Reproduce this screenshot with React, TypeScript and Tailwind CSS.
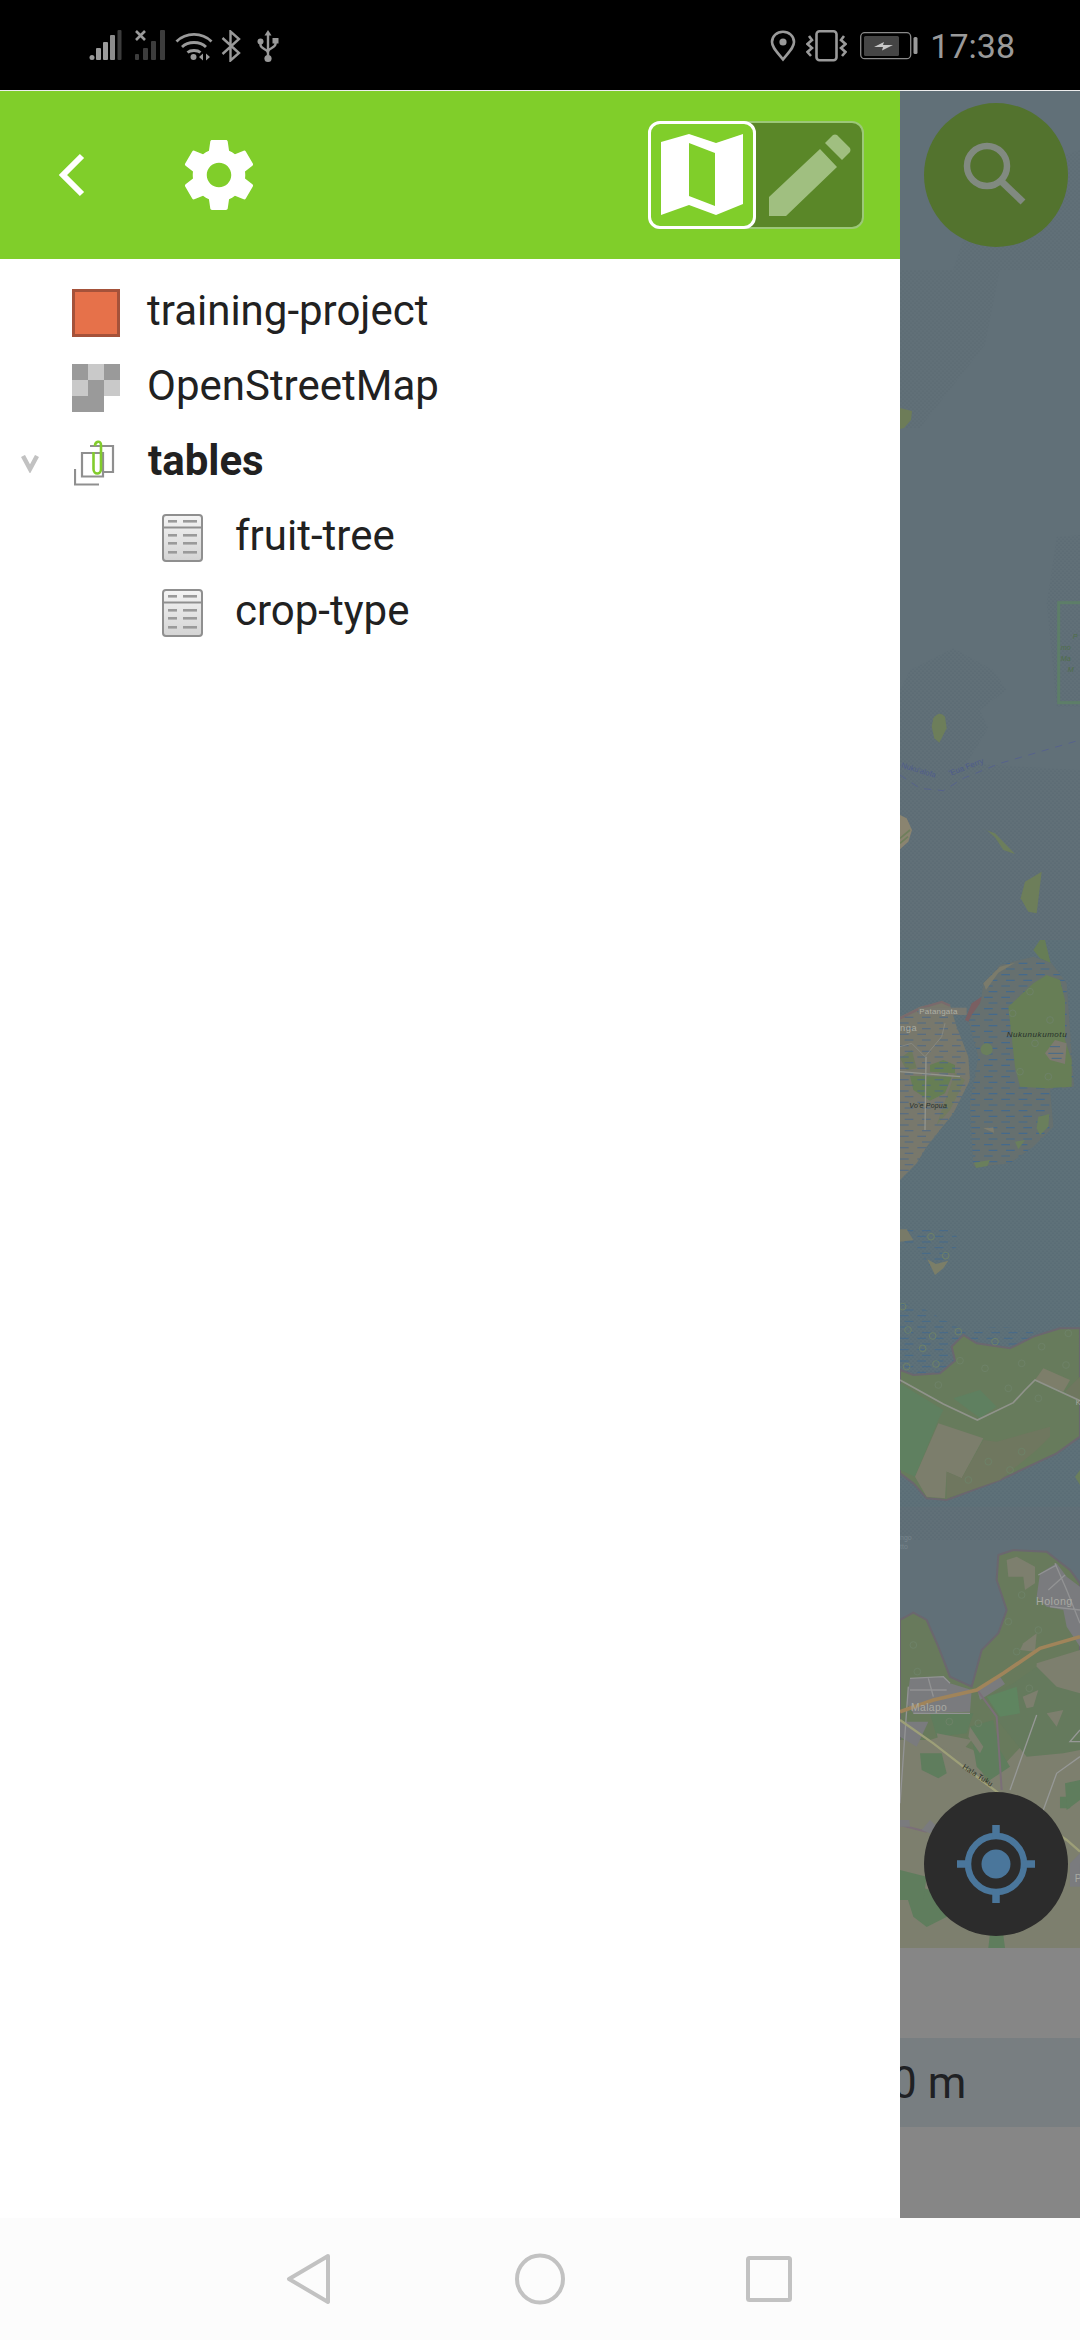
import React from "react";

function Signal1() {
  return (
    <svg width="36" height="32" viewBox="0 0 36 32" className="shrink-0">
      <circle cx="4" cy="27.5" r="2.5" fill="#9a9a9a" />
      <rect x="8" y="18" width="5" height="12" rx="1" fill="#9a9a9a" />
      <rect x="15" y="12" width="5" height="18" rx="1" fill="#9a9a9a" />
      <rect x="22" y="5" width="5" height="25" rx="1" fill="#8c8c8c" />
      <rect x="29.5" y="0" width="4" height="30" rx="1" fill="#3c3c3c" />
    </svg>
  );
}
function Signal2() {
  return (
    <svg width="34" height="32" viewBox="0 0 34 32" className="shrink-0">
      <path d="M1 1 L10 10 M10 1 L1 10" stroke="#9a9a9a" strokeWidth="2.6" />
      <rect x="0" y="24" width="4" height="6" rx="1" fill="#3c3c3c" />
      <rect x="8" y="18" width="5" height="12" rx="1" fill="#3c3c3c" />
      <rect x="16" y="11" width="5" height="19" rx="1" fill="#3c3c3c" />
      <rect x="25" y="0" width="5" height="30" rx="1" fill="#3c3c3c" />
    </svg>
  );
}
function Wifi() {
  return (
    <svg width="38" height="32" viewBox="0 0 38 32" className="shrink-0">
      <g fill="none" stroke="#9a9a9a" strokeWidth="2.8">
        <path d="M1.5 11.5 C11 2 27 2 36.5 11.5" />
        <path d="M7 17 C13 11 25 11 31 17" />
        <path d="M12.5 22.5 C15.5 19.8 22.5 19.8 25.5 22.5" />
      </g>
      <circle cx="18.5" cy="27" r="3" fill="#9a9a9a" />
      <path d="M24 27 L28 23.5 V30.5 Z M31 23.5 L31 30.5 L35 27 Z" fill="#9a9a9a" />
    </svg>
  );
}
function Bluetooth() {
  return (
    <svg width="20" height="32" viewBox="0 0 20 32" className="shrink-0">
      <path d="M1.5 8 L18 23 L9.5 30.5 V1.5 L18 9 L1.5 24" fill="none" stroke="#9a9a9a" strokeWidth="2.4" />
    </svg>
  );
}
function Usb() {
  return (
    <svg width="22" height="33" viewBox="0 0 22 33" className="shrink-0">
      <path d="M11 0 L14.5 5.5 H7.5 Z" fill="#9a9a9a" />
      <path d="M11 4 V28 M3.5 12 V15 C3.5 19 11 19 11 23 M18.5 11 V14 C18.5 18 11 18 11 22" fill="none" stroke="#9a9a9a" strokeWidth="2.4" />
      <circle cx="3.5" cy="11.5" r="3" fill="#9a9a9a" />
      <rect x="15.5" y="8" width="6" height="5.5" fill="#9a9a9a" />
      <circle cx="11" cy="28.5" r="3.6" fill="#9a9a9a" />
    </svg>
  );
}
function Pin() {
  return (
    <svg width="26" height="32" viewBox="0 0 26 32" className="shrink-0">
      <path d="M13 29.5 C7 22 2 17.5 2 12 C2 6 7 1.8 13 1.8 C19 1.8 24 6 24 12 C24 17.5 19 22 13 29.5 Z" fill="none" stroke="#9a9a9a" strokeWidth="2.6" />
      <circle cx="13" cy="12" r="3.6" fill="#9a9a9a" />
    </svg>
  );
}
function Vibrate() {
  return (
    <svg width="41" height="32" viewBox="0 0 41 32" className="shrink-0">
      <rect x="10.5" y="1.3" width="20" height="29" rx="3" fill="none" stroke="#9a9a9a" strokeWidth="2.6" />
      <path d="M3 6 L6 10 L1.5 14 L6 18 L1.5 22 L5 26" fill="none" stroke="#9a9a9a" strokeWidth="2.6" />
      <path d="M38 6 L35 10 L39.5 14 L35 18 L39.5 22 L36 26" fill="none" stroke="#9a9a9a" strokeWidth="2.6" />
    </svg>
  );
}
function Battery() {
  return (
    <svg width="58" height="28" viewBox="0 0 58 28" className="shrink-0">
      <rect x="0.7" y="0.7" width="50" height="26" rx="4" fill="none" stroke="#8a8a8a" strokeWidth="1.3" />
      <rect x="4" y="4" width="35" height="20" rx="1.5" fill="#454545" />
      <path d="M14 15 L24 10 L23 13 L33 13 L22 18.5 L23 15 Z" fill="#c8c8c8" />
      <rect x="53.5" y="5" width="4" height="17" rx="1.5" fill="#9a9a9a" />
    </svg>
  );
}

function StatusBar() {
  return (
    <div className="flex h-[90px] shrink-0 items-center justify-between bg-black pl-[88px] pr-[65px]">
      <div className="flex items-center gap-[8px] pt-[2px]">
        <Signal1 />
        <div className="ml-[3px]"><Signal2 /></div>
        <div className="-ml-[2px]"><Wifi /></div>
        <Bluetooth />
        <div className="ml-[8px]"><Usb /></div>
      </div>
      <div className="flex items-center pt-[2px]">
        <Pin />
        <div className="ml-[10px]"><Vibrate /></div>
        <div className="ml-[13px]"><Battery /></div>
        <span className="ml-[12px] font-['Roboto',sans-serif] text-[34px] leading-none text-[#9a9a9a]">17:38</span>
      </div>
    </div>
  );
}

function Header() {
  return (
    <div className="flex h-[168px] shrink-0 items-center bg-[#80ce2a] pl-[58px] pr-[36px]">
      <svg width="28" height="44" viewBox="0 0 28 44" className="shrink-0">
        <path d="M24 3 L5 22 L24 41" fill="none" stroke="#fff" strokeWidth="6" />
      </svg>
      <svg width="84" height="84" viewBox="0 0 24 24" className="ml-[91px] shrink-0" fill="#fff">
        <path d="M19.43 12.98c.04-.32.07-.64.07-.98s-.03-.66-.07-.98l2.11-1.65c.19-.15.24-.42.12-.64l-2-3.46c-.12-.22-.39-.3-.61-.22l-2.49 1c-.52-.4-1.08-.73-1.69-.98l-.38-2.65C14.46 2.18 14.25 2 14 2h-4c-.25 0-.46.18-.49.42l-.38 2.65c-.61.25-1.17.59-1.69.98l-2.49-1c-.23-.09-.49 0-.61.22l-2 3.46c-.13.22-.07.49.12.64l2.11 1.65c-.04.32-.07.65-.07.98s.03.66.07.98l-2.11 1.65c-.19.15-.24.42-.12.64l2 3.46c.12.22.39.3.61.22l2.49-1c.52.4 1.08.73 1.69.98l.38 2.65c.03.24.24.42.49.42h4c.25 0 .46-.18.49-.42l.38-2.65c.61-.25 1.17-.59 1.69-.98l2.49 1c.23.09.49 0 .61-.22l2-3.46c.12-.22.07-.49-.12-.64l-2.11-1.65zM12 15.5c-1.93 0-3.5-1.57-3.5-3.5s1.57-3.5 3.5-3.5 3.5 1.57 3.5 3.5-1.57 3.5-3.5 3.5z" />
      </svg>
      <div className="ml-auto flex h-[108px] w-[216px] rounded-[12px] border-[2px] border-[#9cc878] bg-[#5a8728]">
        <div className="-m-[2px] flex h-[108px] w-[108px] shrink-0 items-center justify-center rounded-[12px] border-[3px] border-white bg-[#80ce2a]">
          <svg width="82" height="82" viewBox="0 0 82 82">
            <path fill="#fff" fillRule="evenodd" d="M0 8 L28 0 L55 9 L82 0 V70 L55 81 L28 71 L0 81 Z M28 9 V62 L54 72 V19 Z" />
          </svg>
        </div>
        <div className="flex flex-1 items-center justify-center pl-[4px]">
          <svg width="82" height="82" viewBox="0 0 82 82">
            <path fill="#a0bf80" d="M0 63 L51 15 L68 33 L17 82 H0 Z M56 9 L64 1 Q66 0 68 1 L81 14 Q82 16 81 18 L73 26 Z" />
          </svg>
        </div>
      </div>
    </div>
  );
}

function TableIcon() {
  return (
    <svg width="41" height="48" viewBox="0 0 41 48" className="shrink-0">
      <defs>
        <linearGradient id="tbl" x1="0" y1="0" x2="0" y2="1">
          <stop offset="0" stopColor="#f4f4f4" />
          <stop offset="1" stopColor="#d4d4d4" />
        </linearGradient>
      </defs>
      <rect x="1" y="1" width="39" height="46" rx="3" fill="url(#tbl)" stroke="#8f8f8f" strokeWidth="2" />
      <path d="M1 13.5 H40" stroke="#8f8f8f" strokeWidth="2" />
      <g fill="#9a9a9a">
        <rect x="6" y="6" width="9" height="2.6" />
        <rect x="21" y="6" width="14" height="2.6" />
        <rect x="6" y="20" width="9" height="2.6" />
        <rect x="21" y="20" width="14" height="2.6" />
        <rect x="6" y="28" width="9" height="2.6" />
        <rect x="21" y="28" width="14" height="2.6" />
        <rect x="6" y="37" width="9" height="2.6" />
        <rect x="21" y="37" width="14" height="2.6" />
      </g>
    </svg>
  );
}

function TileIcon() {
  const c = ["#9a9a9a", "#c9c9c9", "#9a9a9a", "#c9c9c9", "#9a9a9a", "#c9c9c9", "#9a9a9a", "#9a9a9a", "#ffffff"];
  return (
    <div className="grid h-[48px] w-[48px] shrink-0 grid-cols-3 grid-rows-3">
      {c.map((color, i) => (
        <div key={i} style={{ backgroundColor: color }} />
      ))}
    </div>
  );
}

function GroupIcon() {
  return (
    <svg width="42" height="46" viewBox="0 0 42 46" className="shrink-0">
      <g fill="none" stroke="#8f8f8f" strokeWidth="2.2">
        <path d="M1 29 V44.5 H25" />
        <path d="M8 36.5 V13 H29 V36.5 Z" />
        <path d="M16 6 H39 V32 H29" />
      </g>
      <path d="M19.5 12 V29 C19.5 35 27 35 27 29 V5 C27 0 21 1 21 6" fill="none" stroke="#82cc2c" strokeWidth="2.6" />
    </svg>
  );
}

function Row({ children, indent }: { children: React.ReactNode; indent?: boolean }) {
  return <div className={`flex h-[75px] items-center ${indent ? "pl-[162px]" : "pl-[72px]"}`}>{children}</div>;
}

const labelCls = "font-['Roboto',sans-serif] text-[42px] leading-none -mt-[3px] text-[#212121]";

function Drawer() {
  return (
    <div className="flex w-[900px] shrink-0 flex-col bg-white">
      <Header />
      <div className="flex flex-1 flex-col pt-[16px]">
        <Row>
          <div className="h-[48px] w-[48px] shrink-0 border-[3px] border-[#a5523a] bg-[#e6714a]" />
          <span className={`ml-[27px] ${labelCls}`}>training-project</span>
        </Row>
        <Row>
          <TileIcon />
          <span className={`ml-[27px] ${labelCls}`}>OpenStreetMap</span>
        </Row>
        <div className="flex h-[75px] items-center pl-[21px]">
          <svg width="18" height="18" viewBox="0 0 18 18" className="mt-[2px] shrink-0">
            <path d="M2 1 L9 14 L16 1" fill="none" stroke="#c2c2c2" strokeWidth="4.5" />
          </svg>
          <div className="ml-[35px]"><GroupIcon /></div>
          <span className={`ml-[32px] font-bold ${labelCls}`}>tables</span>
        </div>
        <Row indent>
          <TableIcon />
          <span className={`ml-[32px] ${labelCls}`}>fruit-tree</span>
        </Row>
        <Row indent>
          <TableIcon />
          <span className={`ml-[32px] ${labelCls}`}>crop-type</span>
        </Row>
      </div>
    </div>
  );
}

const treeSpots: [number, number][] = [
  [93, 890], [137, 947], [8, 1100], [24, 1170], [98, 1188], [175, 1175], [68, 1225], [285, 1205], [20, 1280], [108, 1272],
  [180, 1262], [255, 1285], [365, 1270], [425, 1220], [498, 1275], [505, 1180], [115, 1335], [325, 1345], [415, 1375],
  [390, 155], [338, 220], [450, 240], [405, 310], [360, 395], [445, 410],
  [265, 1565], [365, 1535], [205, 1620], [330, 1590],
  [365, 1965], [325, 2045], [415, 2070], [350, 2135], [40, 2115], [52, 2195], [148, 2345], [235, 2350], [388, 2245],
];

const reefDashes = (x0: number, y0: number, x1: number, y1: number) => {
  const out: string[] = [];
  let row = 0;
  for (let y = y0; y < y1; y += 17) {
    for (let x = x0 + (row % 2 ? 14 : 0); x < x1; x += 52) {
      out.push(`M${x} ${y} h26`);
    }
    row++;
  }
  return out.join(" ");
};

function MapArt() {
  return (
    <svg className="h-full w-full" viewBox="900 91 180 1857" preserveAspectRatio="none">
      <defs>
        <pattern id="stip" width="4" height="4" patternUnits="userSpaceOnUse">
          <circle cx="1" cy="1" r="0.6" fill="#53626b" />
          <circle cx="3" cy="3" r="0.6" fill="#53626b" />
        </pattern>
        <pattern id="stip2" width="12" height="12" patternUnits="userSpaceOnUse">
          <circle cx="3" cy="3" r="1.7" fill="#50606a" />
          <circle cx="9" cy="9" r="1.7" fill="#50606a" />
        </pattern>
        <clipPath id="reefA">
          <path d="M250 130 L300 75 L400 50 L455 70 L500 130 L522 440 L450 448 L460 560 L400 620 L330 670 L220 682 L210 490 L235 350 L205 240 L245 170 Z" />
        </clipPath>
        <clipPath id="reefB">
          <path d="M0 230 L60 200 L125 185 L150 195 L170 260 L205 350 L210 420 L160 520 L80 620 L50 670 L0 720 Z" />
        </clipPath>
        <clipPath id="reefC">
          <path d="M0 1090 L60 1100 L170 1160 L190 1170 L300 1160 L400 1170 L400 1220 L330 1230 L230 1215 L190 1190 L160 1225 L165 1262 L125 1300 L50 1310 L0 1292 Z M0 860 L170 860 L170 920 L110 1000 L40 920 L0 910 Z" />
        </clipPath>
      </defs>

      {/* water and its stipple, north of the islands */}
      <rect x="900" y="91" width="180" height="1857" fill="#617078" />
      <path d="M953 270 L975 205 L1010 173 L1080 150 V270 Z" fill="url(#stip)" />
      <path d="M900 270 H1000 L985 345 L920 428 L900 428 Z" fill="url(#stip)" />

      <path d="M900 408 L912 411 L911 420 L904 428 L900 429 Z" fill="#6d7c58" />

      {/* y = 480 to 960 */}
      <g transform="translate(900 480) scale(0.33333)">
        <path d="M0 630 L30 570 L160 505 L280 570 L320 630 L240 690 L265 745 L200 850 L540 870 L540 1440 L0 1440 Z" fill="url(#stip2)" />
        <path d="M440 370 L470 170 L540 165 L540 680 L470 680 Z" fill="url(#stip2)" />
        <rect x="476" y="368" width="90" height="300" fill="none" stroke="#5d7e68" strokeWidth="9" />
        <g className="font-['Liberation_Sans',sans-serif]" fontStyle="italic" fontSize="22" fill="#4f6e48">
          <text x="518" y="478">P</text>
          <text x="482" y="510">mo</text>
          <text x="482" y="542">Ma</text>
          <text x="503" y="575">M</text>
        </g>
        <path d="M100 715 Q118 690 135 710 L140 745 L118 788 L103 775 L95 740 Z" fill="#6d7e5a" />
        <path d="M0 885 L60 925 L130 932 L190 895 L300 850 L540 780" fill="none" stroke="#56628c" strokeWidth="3" strokeDasharray="22 20" />
        <g className="font-['Liberation_Sans',sans-serif]" fontSize="24" fill="#4f5c8c">
          <text x="2" y="862" transform="rotate(17 2 862)" fontSize="23">Nuku'alofa</text>
          <text x="150" y="888" transform="rotate(-21 150 888)">'Eua Ferry</text>
        </g>
        <path d="M0 1005 L20 1015 L36 1050 L25 1085 L0 1108 Z" fill="#8a8470" />
        <path d="M0 1075 L30 1050 M0 1090 L24 1070" stroke="#6f7f5c" strokeWidth="5" />
        <path d="M242 1045 L285 1060 L345 1122 L310 1110 L285 1072 L262 1052 Z" fill="#6c7e5c" />
        <path d="M425 1175 L410 1300 L385 1295 L362 1255 L375 1205 Z" fill="#6d7e5a" />
        <path d="M420 1380 L445 1440 L403 1440 L400 1410 Z" fill="#6d7e5a" />
      </g>

      {/* y = 940 to the foot of the map */}
      <g transform="translate(900 940) scale(0.33333)">
        <rect x="0" y="0" width="540" height="1700" fill="#5e7179" />
        <rect x="0" y="0" width="540" height="1800" fill="url(#stip2)" />

        <path d="M420 0 L435 0 L452 70 L420 55 L400 30 Z" fill="#667d56" />

        {/* reef */}
        <path d="M250 130 L300 75 L400 50 L455 70 L500 130 L522 440 L450 448 L460 560 L400 620 L330 670 L220 682 L210 490 L235 350 L205 240 L245 170 Z" fill="#66706f" />
        <path d={reefDashes(200, 70, 530, 690)} clipPath="url(#reefA)" stroke="#456a8c" strokeWidth="3.5" />
        <path d="M250 130 L300 80 L345 68 L295 98 L258 150 Z" fill="#7b7b6b" />
        <path d="M195 240 L215 190 L245 170 L240 190 L215 225 L205 245 Z" fill="#7a5f62" />

        {/* Nukunukumotu */}
        <path d="M325 200 L400 130 L440 105 L480 120 L495 180 L495 300 L515 360 L515 440 L440 445 L360 440 L345 380 L335 290 Z" fill="#677e56" />
        <path d="M435 340 L465 300 L500 310 L495 372 L450 360 Z" fill="#7d7a70" />
        <path d="M450 320 H480 M445 340 H490 M455 355 H485" stroke="#456a8c" strokeWidth="3" />
        <circle cx="260" cy="328" r="18" fill="#6a7f5c" />
        <path d="M415 530 L448 522 L445 560 L420 585 L410 565 Z" fill="#6a7f5c" />
        <path d="M222 668 L270 660 L262 678 L228 684 Z" fill="#6a7f5c" />
        <path d="M345 605 L375 600 L355 628 Z" fill="#6a7f5c" />
        <path d="M250 565 L280 562 L282 578 Z" fill="#7f7d6d" />

        {/* Patangata */}
        <path d="M0 230 L60 200 L125 185 L150 195 L170 260 L205 350 L210 420 L160 520 L80 620 L50 670 L0 720 Z" fill="#78786c" />
        <path d="M0 235 L60 205 L125 186 L150 197" fill="none" stroke="#7a6a6c" strokeWidth="7" />
        <path d="M30 408 L155 410 L135 460 L90 482 L40 450 Z" fill="#667e54" />
        <path d="M90 375 L130 360 L165 375 L165 400 L90 395 Z" fill="#667e54" />
        <path d="M0 355 L35 330 L50 385 L20 390 Z" fill="#6d7a5c" />
        <path d="M165 400 L195 420 L150 510 L110 555 L120 525 Z" fill="#727b5f" />
        <path d={reefDashes(0, 215, 215, 720)} clipPath="url(#reefB)" stroke="#4f6a86" strokeWidth="3.2" />
        <path d="M0 395 L180 410 M78 350 L75 570" fill="none" stroke="#93958d" strokeWidth="4" />
        <path d="M0 320 L35 310 L75 350 L125 290 L135 250" fill="none" stroke="#8a8c84" strokeWidth="2.5" />
        <rect x="55" y="203" width="145" height="22" fill="#787870" />
        <g className="font-['Liberation_Sans',sans-serif]">
          <text x="58" y="222" fontSize="24" letterSpacing="0.6" fill="#aeafa4">Patangata</text>
          <text x="0" y="273" fontSize="28" letterSpacing="1.5" fill="#a8aaa0">nga</text>
          <text x="28" y="505" fontSize="21" fontStyle="italic" letterSpacing="0.6" fill="#262f2a">Vo'e Popua</text>
          <text x="320" y="290" fontSize="24" fontStyle="italic" letterSpacing="1.7" fill="#262f2a">Nukunukumotu</text>
        </g>

        {/* shoals and central island */}
        <path d={reefDashes(0, 855, 410, 1310)} clipPath="url(#reefC)" stroke="#456a8c" strokeWidth="3" />
        <path d="M0 868 L20 868 L40 900 L0 905 Z" fill="#787a68" />
        <path d="M82 958 L108 972 L145 962 L130 985 L105 1005 Z" fill="#7b7e68" />

        <path d="M0 1290 L40 1305 L120 1300 L165 1262 L155 1220 L190 1185 L230 1210 L330 1225 L400 1190 L480 1165 L540 1165 V1490 L470 1540 L300 1620 L140 1680 L80 1675 L40 1630 L0 1600 Z" fill="#677b5c" stroke="#6b676f" strokeWidth="6" />
        <path d="M0 1330 L130 1410 L115 1440 L45 1610 L0 1590 Z" fill="#5f8060" />
        <path d="M115 1450 L250 1495 L185 1615 L140 1595 L135 1675 L80 1670 L45 1610 Z" fill="#7c7e6c" />
        <path d="M250 1500 L290 1505 L450 1460 L450 1490 L410 1530 L300 1620 L140 1675 L140 1595 L185 1615 Z" fill="#6f775f" />
        <path d="M405 1320 L430 1285 L510 1320 L490 1355 Z" fill="#7d7e6a" />
        <path d="M495 1355 L540 1310 V1385 Z" fill="#6f775f" />
        <path d="M160 1375 L240 1350 L290 1400 L240 1435 Z" fill="#5f8060" />
        <path d="M0 1320 L130 1392 L232 1440 L340 1388 L375 1350 L405 1320 L540 1382" fill="none" stroke="#90938b" strokeWidth="5" />
        <path d="M525 1610 L540 1590 V1635 Z" fill="#6a7f5c" />
        <text x="527" y="1396" className="font-['Liberation_Sans',sans-serif]" fontSize="22" fill="#a8a8a0">K</text>

        <g className="font-['Liberation_Sans',sans-serif]" fontSize="21" fill="#77858c">
          <text x="0" y="1800">ngo</text>
          <text x="0" y="1828">tto</text>
        </g>

        {/* southern land */}
        <path d="M295 1845 L340 1830 L440 1835 L510 1890 L540 1930 V3030 H0 V2040 L40 2018 L80 2040 L115 2120 L150 2210 L215 2240 L245 2130 L295 2080 L320 2010 L290 1920 Z" fill="#687a5c" stroke="#6b676f" strokeWidth="6" />
        <path d="M0 2400 L90 2400 L120 2390 L220 2430 L260 2530 L400 2380 L410 2170 L540 2130 V3030 H0 Z" fill="#7d7f6e" />
        <path d="M60 2440 L125 2440 L140 2500 L115 2515 L65 2490 Z" fill="#5f7d5d" />
        <path d="M210 2360 L280 2340 L300 2430 L330 2480 L270 2520 L230 2480 Z" fill="#5f7d5d" />
        <path d="M90 2320 L220 2320 L200 2380 L110 2390 Z" fill="#5f7d5d" />
        <path d="M410 2180 L470 2240 L540 2260 V2430 L490 2440 L380 2450 L300 2350 L260 2270 L340 2230 Z" fill="#657a5d" />
        <path d="M260 2270 L350 2240 L360 2320 L300 2330 Z" fill="#5f8560" />
        <path d="M480 2570 L520 2570 L510 2605 L480 2605 Z M500 2530 L540 2525 V2580 Z" fill="#5f7d5d" />
        <path d="M370 2110 L410 2080 L405 2135 L360 2130 Z" fill="#7d7f6e" />
        <path d="M320 1860 L350 1850 L405 1880 L405 1930 L375 1950 L370 1910 L325 1910 Z" fill="#7d7f6e" />
        <path d="M368 2270 L415 2250 L400 2300 L380 2305 Z M440 2320 L490 2310 L470 2360 Z" fill="#7d7f6e" />
        <path d="M210 2360 L250 2420 L240 2440 L205 2390 Z M110 2380 L215 2400 L180 2440 L120 2420 Z" fill="#7d7f6e" />
        <path d="M24 2829 L120 2860 L141 2930 L80 2961 L40 2930 L24 2880 Z" fill="#5f7d5d" />
        <path d="M0 2790 L80 2810 L70 2880 L0 2880 Z" fill="#5f7d5d" />
        <path d="M270 2980 L310 2985 L315 3024 L265 3024 Z" fill="#5f7d5d" />
        <path d="M495 2530 L540 2520 V2580 L500 2610 Z" fill="#5f7d5d" />

        {/* towns */}
        <path d="M420 1900 L470 1870 L500 1910 L540 1940 V2120 L500 2060 L490 2010 L440 2000 L410 1970 Z" fill="#7a7b7e" />
        <path d="M415 1905 L470 1875 M445 1950 L495 1905 M465 1870 L500 1950 L540 2050 M450 2000 L540 2010" fill="none" stroke="#929394" strokeWidth="4" />
        <path d="M30 2215 L130 2210 L150 2230 L215 2250 L210 2315 L40 2320 L20 2290 Z" fill="#7a7b7e" />
        <path d="M0 2345 L85 2345 L50 2420 L0 2390 Z" fill="#7a7b7e" />
        <path d="M30 2215 L130 2210 L150 2230 M30 2250 H140 M85 2215 L100 2270 M40 2320 H210 M25 2240 L0 2590" fill="none" stroke="#929394" strokeWidth="4" />
        <path d="M232 2250 L300 2210 L315 2232 L240 2280 Z" fill="#7a7b7e" />
        <path d="M232 2250 L290 2330 L305 2550" fill="none" stroke="#7b6f78" strokeWidth="6" />
        <path d="M0 2315 L100 2280 L230 2250 L310 2200 L420 2125 L540 2090" fill="none" stroke="#a0845a" strokeWidth="11" />
        <path d="M0 2340 L100 2410 L190 2480 L290 2555 L500 2700 L540 2735" fill="none" stroke="#9d9f78" strokeWidth="7" />
        <path d="M410 2325 L330 2550 M540 2450 L470 2500 L430 2610 M540 2370 L510 2405 H540" fill="none" stroke="#969896" strokeWidth="4" />
        <path d="M0 2655 L80 2675" fill="none" stroke="#7b6f78" strokeWidth="6" />
        <path d="M0 2640 H28 L30 2660 L0 2660 Z M65 2670 L90 2640 L112 2660 L90 2680 Z" fill="#7a7b7e" />
        <path d="M510 2770 L540 2740 V2840 L510 2840 Z" fill="#7a7b7e" />
        <g fill="none" stroke="#6d8267" strokeWidth="3">
          {treeSpots.map(([x, y], i) => (
            <circle key={i} cx={x} cy={y} r="10" />
          ))}
        </g>
        <g className="font-['Liberation_Sans',sans-serif]">
          <text x="408" y="1996" fontSize="32" letterSpacing="1.5" fill="#a8a9a2">Holong</text>
          <text x="33" y="2312" fontSize="31" letterSpacing="1.2" fill="#a8a9a2">Malapo</text>
          <text x="186" y="2484" transform="rotate(33 186 2484)" fontSize="22" letterSpacing="0.5" fill="#2d3228">Hala Tuku</text>
          <text x="524" y="2825" fontSize="30" fill="#a8a9a2">P</text>
        </g>
      </g>
    </svg>
  );
}

function RightPanel() {
  return (
    <div className="relative flex flex-1 flex-col overflow-hidden">
      <div className="min-h-0 flex-1">
        <MapArt />
      </div>
      <div className="h-[90px] shrink-0 bg-[#868686]" />
      <div className="flex h-[89px] shrink-0 items-center bg-[#787e81]">
        <span className="-ml-[8px] font-['Roboto',sans-serif] text-[44px] leading-none whitespace-nowrap text-[#1f2124]">0 m</span>
      </div>
      <div className="h-[91px] shrink-0 bg-[#868686]" />

      <div className="absolute left-[24px] top-[12px] flex h-[144px] w-[144px] items-center justify-center rounded-full bg-[#53732e]">
        <svg width="84" height="84" viewBox="0 0 84 84">
          <circle cx="33" cy="33" r="20" fill="none" stroke="#818a80" strokeWidth="6.5" />
          <path d="M47 48 L69 69" stroke="#818a80" strokeWidth="7" />
        </svg>
      </div>
      <div className="absolute left-[24px] top-[1701px] flex h-[144px] w-[144px] items-center justify-center rounded-full bg-[#2c2c2c]">
        <svg width="80" height="80" viewBox="0 0 80 80">
          <circle cx="40" cy="40" r="14.5" fill="#4a769b" />
          <circle cx="40" cy="40" r="28" fill="none" stroke="#4a769b" strokeWidth="6.5" />
          <path d="M40 1 V14 M40 66 V79 M1 40 H14 M66 40 H79" stroke="#4a769b" strokeWidth="7.5" />
        </svg>
      </div>
    </div>
  );
}

function NavBar() {
  return (
    <div className="flex h-[122px] shrink-0 items-start bg-[#fcfcfc] pl-[286px] pt-[35px]">
      <svg width="46" height="52" viewBox="0 0 46 52" className="shrink-0">
        <path d="M42 3 L3 26 L42 49 Z" fill="none" stroke="#c2c2c2" strokeWidth="4" strokeLinejoin="round" />
      </svg>
      <svg width="50" height="52" viewBox="0 0 50 52" className="ml-[183px] shrink-0">
        <ellipse cx="25" cy="26" rx="23" ry="23.5" fill="none" stroke="#c2c2c2" strokeWidth="4" />
      </svg>
      <svg width="46" height="46" viewBox="0 0 46 46" className="ml-[181px] mt-[3px] shrink-0">
        <rect x="2" y="2" width="42" height="42" rx="1.5" fill="none" stroke="#c2c2c2" strokeWidth="4" />
      </svg>
    </div>
  );
}

export default function App() {
  return (
    <div className="flex h-[2340px] w-[1080px] flex-col overflow-hidden bg-white">
      <StatusBar />
      <div className="h-px shrink-0 bg-[#eeeeee]" />
      <div className="flex min-h-0 flex-1">
        <Drawer />
        <RightPanel />
      </div>
      <NavBar />
    </div>
  );
}
